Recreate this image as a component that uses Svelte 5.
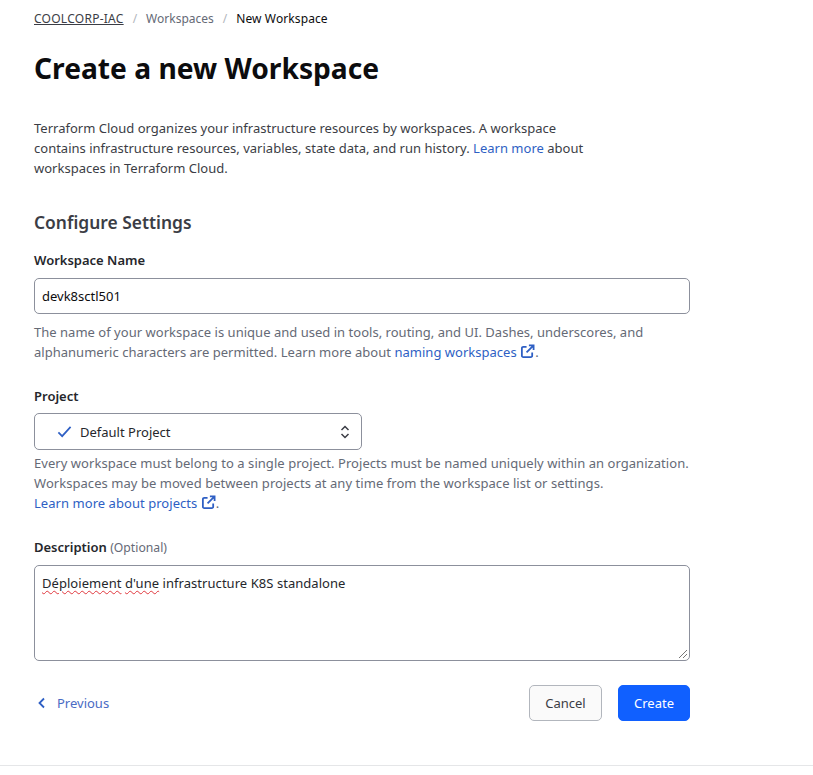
<script>
  let workspaceName = "devk8sctl501";
</script>

<main>
  <div class="page">
    <nav class="crumbs">
      <a href="#org" class="org">COOLCORP-IAC</a>
      <span class="sep">/</span>
      <a href="#ws" class="ws">Workspaces</a>
      <span class="sep">/</span>
      <span class="current">New Workspace</span>
    </nav>

    <h1>Create a new Workspace</h1>

    <p class="intro">
      Terraform Cloud organizes your infrastructure resources by workspaces. A workspace
      contains infrastructure resources, variables, state data, and run history.
      <a href="#more">Learn more</a> about workspaces in Terraform Cloud.
    </p>

    <h2>Configure Settings</h2>

    <form>
      <label for="name">Workspace Name</label>
      <input id="name" type="text" bind:value={workspaceName} />
      <p class="help">
        The name of your workspace is unique and used in tools, routing, and UI. Dashes, underscores, and
        alphanumeric characters are permitted. Learn more about
        <a href="#naming">naming workspaces <svg class="ext" viewBox="0 0 16 16"><path d="M7 3H3.500A1.500 1.500 0 0 0 2 4.500v8A1.500 1.500 0 0 0 3.500 14h8a1.500 1.500 0 0 0 1.500-1.500V9M9.500 1.500h5v5M14.500 1.500 7 9" /></svg></a>.
      </p>

      <div class="field-label project-label">Project</div>
      <div class="select">
        <svg class="check" viewBox="0 0 16 16"><path d="M1.500 9 5.500 13 14.500 3" /></svg>
        <span>Default Project</span>
        <svg class="updown" viewBox="0 0 10 16"><path d="M1.500 6 5 2.500 8.500 6M1.500 10 5 13.500 8.500 10" /></svg>
      </div>
      <p class="help tight">
        Every workspace must belong to a single project. Projects must be named uniquely within an organization.
        <br />
        Workspaces may be moved between projects at any time from the workspace list or settings.
        <br />
        <a href="#projects">Learn more about projects <svg class="ext" viewBox="0 0 16 16"><path d="M7 3H3.500A1.500 1.500 0 0 0 2 4.500v8A1.500 1.500 0 0 0 3.500 14h8a1.500 1.500 0 0 0 1.500-1.500V9M9.500 1.500h5v5M14.500 1.500 7 9" /></svg></a>.
      </p>

      <div class="field-label desc-label">Description <span class="optional">(Optional)</span></div>
      <div class="textarea">
        <span class="typo">Déploiement</span> <span class="typo">d'une</span> infrastructure K8S standalone
        <svg class="grip" viewBox="0 0 10 10"><path d="M1 9 9 1M5 9 9 5" /></svg>
      </div>

      <div class="actions">
        <a href="#prev" class="previous">
          <svg viewBox="0 0 10 12"><path d="M7 1.500 2.500 6 7 10.500" /></svg>
          Previous
        </a>
        <div class="buttons">
          <button type="button" class="cancel">Cancel</button>
          <button type="button" class="create">Create</button>
        </div>
      </div>
    </form>
  </div>
</main>

<style>
  :global(body) {
    background: #fff;
  }

  main {
    box-sizing: border-box;
    height: 766px;
    border-bottom: 1px solid #e5e6e8;
    font-family: "Noto Sans", "Open Sans", sans-serif;
    font-size: 13px;
    color: #3b3d45;
  }

  .page {
    width: 656px;
    padding: 10px 0 0 34px;
  }

  a {
    color: #2e5fc4;
    text-decoration: none;
  }

  .crumbs {
    display: flex;
    gap: 9px;
    line-height: 18px;
    font-size: 12px;
  }
  .crumbs .org {
    color: #3b3d45;
    letter-spacing: 0.26px;
    text-decoration: underline;
  }
  .crumbs .ws {
    color: #656a76;
  }
  .crumbs .sep {
    color: #b2b6bd;
  }
  .crumbs .current {
    color: #0c0c0e;
    letter-spacing: 0.1px;
  }

  h1 {
    margin: 17px 0 0;
    font-size: 28.200px;
    line-height: 46px;
    font-weight: 700;
    color: #0c0c0e;
  }

  .intro {
    width: 560px;
    margin: 27px 0 0;
    line-height: 20px;
    letter-spacing: 0.01px;
  }

  h2 {
    margin: 29px 0 0;
    font-size: 17.400px;
    line-height: 30px;
    font-weight: 600;
    color: #3b3d45;
  }

  label,
  .field-label {
    display: block;
    font-weight: 600;
    color: #25272c;
    line-height: 20px;
  }
  label {
    margin-top: 13px;
  }

  input {
    display: block;
    box-sizing: border-box;
    width: 656px;
    height: 36px;
    margin-top: 8px;
    padding: 0 7px;
    border: 1px solid #8c909c;
    border-radius: 5px;
    font: inherit;
    color: #0c0c0e;
  }

  .help {
    margin: 8px 0 0;
    line-height: 20px;
    letter-spacing: 0.02px;
    color: #656a76;
  }
  .help.tight {
    margin-top: 3px;
    letter-spacing: 0.05px;
    white-space: nowrap;
  }

  .ext {
    width: 15px;
    height: 15px;
    vertical-align: -2px;
    fill: none;
    stroke: #2e5fc4;
    stroke-width: 1.900;
  }

  .project-label {
    margin-top: 24px;
  }

  .select {
    display: flex;
    align-items: center;
    box-sizing: border-box;
    width: 328px;
    height: 37px;
    margin-top: 7px;
    padding: 0 11px 0 22px;
    border: 1px solid #8c909c;
    border-radius: 5px;
    color: #25272c;
  }
  .select span {
    flex: 1;
    margin-left: 8px;
  }
  .check {
    width: 15px;
    height: 15px;
    fill: none;
    stroke: #2e5fc4;
    stroke-width: 1.800;
  }
  .updown {
    width: 10px;
    height: 16px;
    fill: none;
    stroke: #3b3d45;
    stroke-width: 1.500;
  }

  .desc-label {
    margin-top: 24px;
  }
  .optional {
    font-weight: 400;
    font-size: 12.200px;
    color: #656a76;
  }

  .textarea {
    position: relative;
    box-sizing: border-box;
    width: 656px;
    height: 96px;
    margin-top: 7px;
    padding: 8px 7px;
    border: 1px solid #8c909c;
    border-radius: 5px;
    color: #25272c;
    letter-spacing: 0.05px;
    line-height: 19px;
  }
  .typo {
    text-decoration: underline wavy #e0383e 1px;
    text-underline-offset: 2px;
  }
  .grip {
    position: absolute;
    right: 1px;
    bottom: 1px;
    width: 10px;
    height: 10px;
    fill: none;
    stroke: #777;
    stroke-width: 1;
  }

  .actions {
    display: flex;
    align-items: center;
    justify-content: space-between;
    margin-top: 24px;
  }
  .previous {
    display: flex;
    align-items: center;
    gap: 10px;
    margin-left: 3px;
    color: #4a6bc4;
  }
  .previous svg {
    width: 10px;
    height: 12px;
    fill: none;
    stroke: #2e5fc4;
    stroke-width: 1.800;
  }
  .buttons {
    display: flex;
    gap: 16px;
  }
  button {
    box-sizing: border-box;
    height: 36px;
    border-radius: 5px;
    font: inherit;
  }
  .cancel {
    width: 73px;
    background: #fafafa;
    border: 1px solid #b2b6bd;
    color: #3b3d45;
  }
  .create {
    width: 72px;
    background: #1060ff;
    border: 1px solid #1060ff;
    color: #fff;
  }
</style>
